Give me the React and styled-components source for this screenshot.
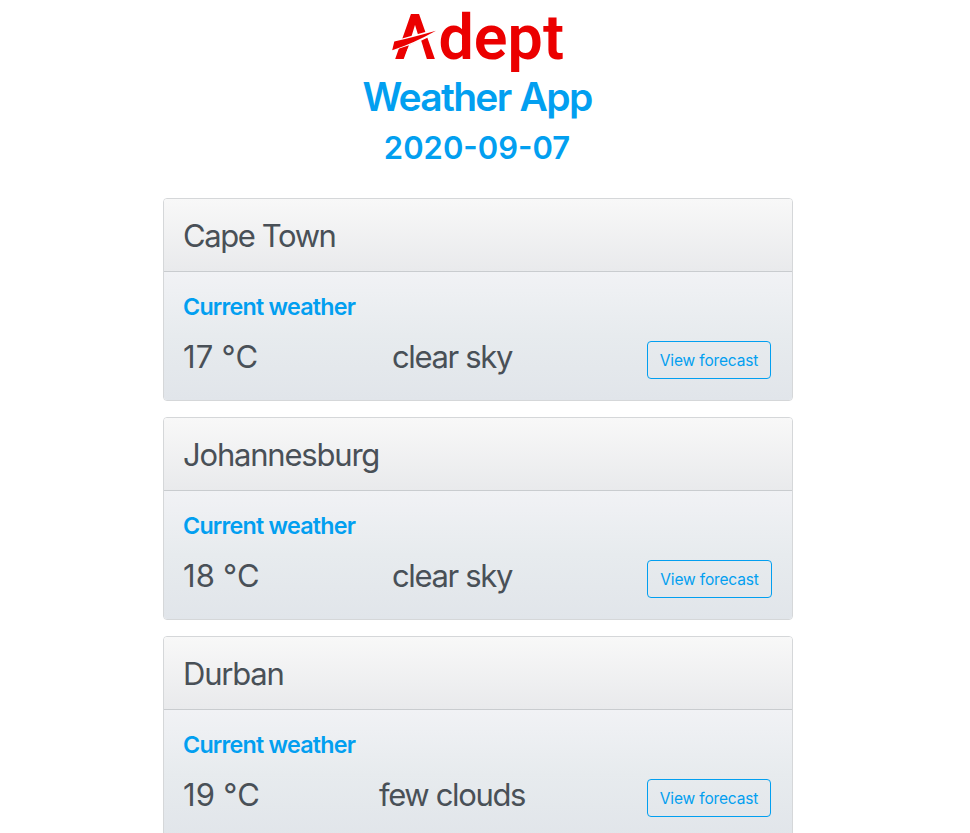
import React from "react";
import styled, { createGlobalStyle } from "styled-components";

const GlobalStyle = createGlobalStyle`
  *, *::before, *::after { box-sizing: border-box; }
  html { overflow: hidden; }
  body {
    margin: 0;
    height: 833px;
    overflow: hidden;
    background: #fff;
    color: #495057;
    font-family: Inter, "Liberation Sans", sans-serif;
    font-size: 16px;
    line-height: 1.5;
  }
`;

const Page = styled.main`
  width: 954px;
`;

const Header = styled.header`
  display: flex;
  flex-direction: column;
  align-items: center;
  height: 198px;
  padding-top: 8px;
  color: #029ff0;
`;

const Logo = styled.svg`
  display: block;
  width: 176px;
  height: 65px;
  overflow: visible;
`;

const Wordmark = styled.text`
  font-family: Roboto, sans-serif;
  font-weight: ${(p) => p.$weight};
  font-size: 63px;
  fill: #eb0000;
`;

const Title = styled.h1`
  margin: 0;
  font-size: 39px;
  font-weight: 600;
  line-height: 48px;
  letter-spacing: -1.7px;
  word-spacing: 1px;
`;

const DateLine = styled.h2`
  margin: 8px 0 0;
  font-size: 31px;
  font-weight: 600;
  line-height: 38px;
`;

const CardList = styled.section`
  display: flex;
  flex-direction: column;
  gap: 16px;
  width: 630px;
  margin-left: 163px;
`;

const Card = styled.article`
  height: 203px;
  border: 1px solid #d5d7d9;
  border-radius: 4px;
  overflow: hidden;
`;

const CardHeader = styled.div`
  height: 73px;
  padding: 13px 19px 11px;
  border-bottom: 1px solid #c9cccf;
  background: linear-gradient(#f8f8f8, #e9eaec);
  font-size: 31px;
  line-height: 48px;
  letter-spacing: ${(p) => p.$tracking}px;
`;

const CardBody = styled.div`
  height: 128px;
  padding: 20px 20px 20px 19px;
  background: linear-gradient(#f1f2f5, #e7ebee 50%, #e1e5ea);
`;

const CardTitle = styled.h5`
  margin: 0;
  color: #029ff0;
  font-size: 23.25px;
  font-weight: 600;
  line-height: 29px;
  letter-spacing: -0.75px;
`;

const WeatherRow = styled.div`
  display: grid;
  grid-template-columns: 156px 226px 1fr;
  height: 58px;
  font-size: 31px;
  line-height: 48px;
`;

const Temperature = styled.span`
  padding-top: 12px;
  white-space: nowrap;
  letter-spacing: 0.2px;
  word-spacing: -1px;
`;

const Condition = styled.span`
  padding-top: 12px;
  text-align: center;
  white-space: nowrap;
  letter-spacing: -1.35px;
`;

const ForecastButton = styled.button`
  justify-self: end;
  align-self: start;
  width: ${(p) => p.$width}px;
  height: 38px;
  margin: 20px ${(p) => 125 - p.$width}px 0 0;
  padding: 1px 0 0;
  border: 1px solid #029ff0;
  border-radius: 4px;
  background: transparent;
  color: #029ff0;
  font: 400 15.5px/24px Inter, sans-serif;
  letter-spacing: -0.15px;
  white-space: nowrap;
`;

const cities = [
  { name: "Cape Town", temp: 17, condition: "clear sky", tracking: -1.4, button: 124 },
  { name: "Johannesburg", temp: 18, condition: "clear sky", tracking: -1.2, button: 125 },
  { name: "Durban", temp: 19, condition: "few clouds", tracking: -1.2, button: 124 },
];

function AdeptLogo() {
  return (
    <Logo viewBox="389 8 176 65" role="img" aria-label="Adept">
      <Wordmark $weight={700} x="395" y="59" textLength="40" lengthAdjust="spacingAndGlyphs">A</Wordmark>
      <path d="M409 45 L421 40 L427 59.5 H403.5 Z" fill="#fff" />
      <path d="M391 41.5 L403 38.2 L427 31.6 L437 29 L430 36.5 L421 40.8 L410 45 L400 48.2 L391 53 Z" fill="#fff" />
      <path d="M394.3 41.5 Q412 37.5 436 30.7 Q414 43 392.2 50.3 Z" fill="#eb0000" />
      <Wordmark $weight={600} x="438.5" y="59" textLength="125.5" lengthAdjust="spacingAndGlyphs">dept</Wordmark>
    </Logo>
  );
}

export default function App() {
  return (
    <>
      <GlobalStyle />
      <Page>
        <Header>
          <AdeptLogo />
          <Title>Weather App</Title>
          <DateLine>2020-09-07</DateLine>
        </Header>
        <CardList>
          {cities.map((city) => (
            <Card key={city.name}>
              <CardHeader $tracking={city.tracking}>{city.name}</CardHeader>
              <CardBody>
                <CardTitle>Current weather</CardTitle>
                <WeatherRow>
                  <Temperature>{city.temp} °C</Temperature>
                  <Condition>{city.condition}</Condition>
                  <ForecastButton $width={city.button}>View forecast</ForecastButton>
                </WeatherRow>
              </CardBody>
            </Card>
          ))}
        </CardList>
      </Page>
    </>
  );
}
